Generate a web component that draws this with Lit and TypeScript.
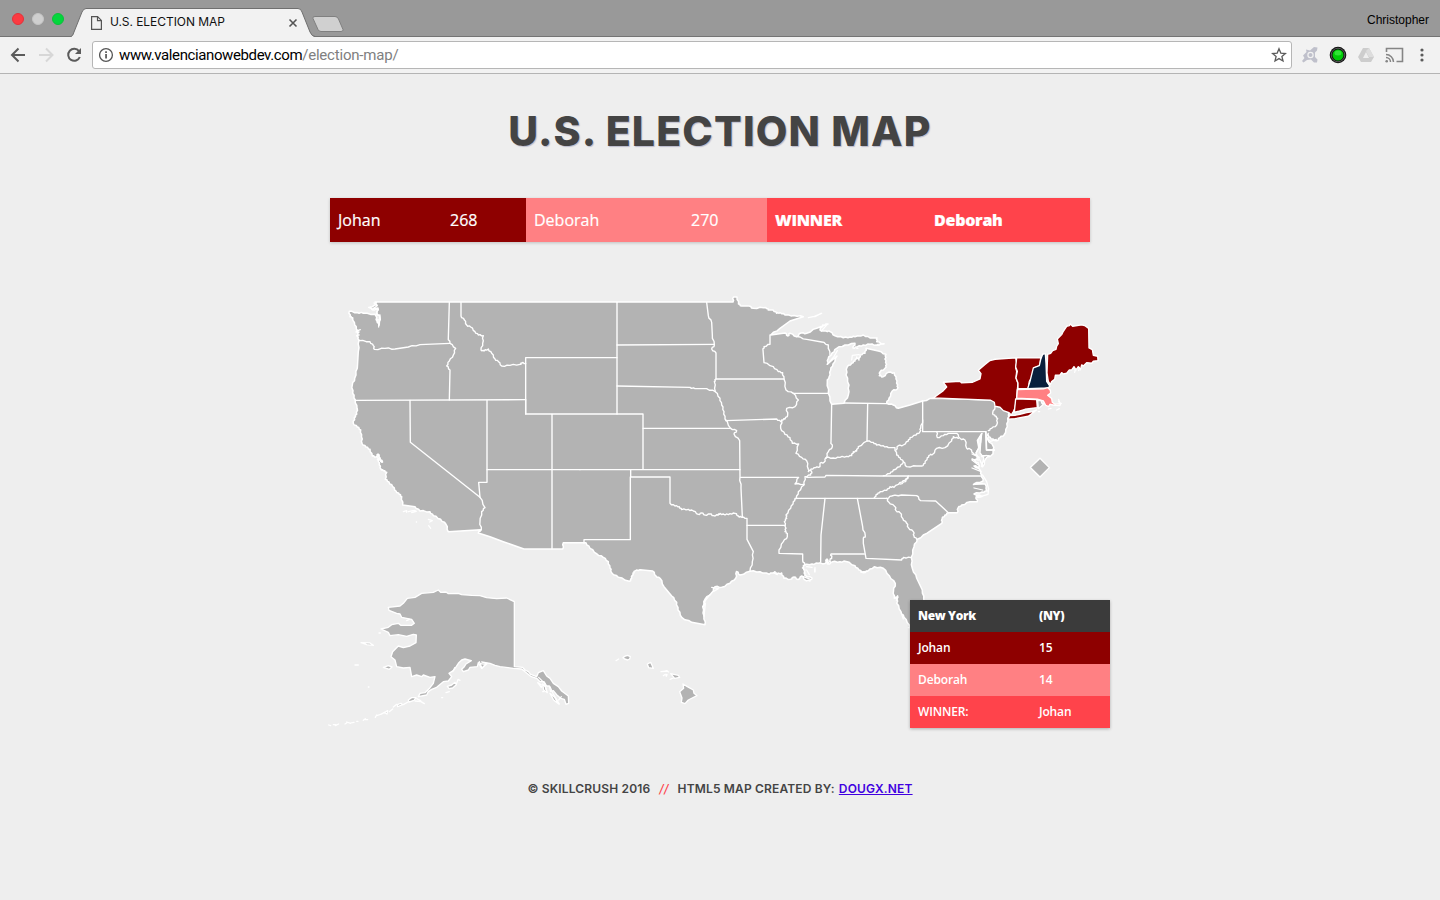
import { LitElement, html, svg, css } from "lit";
import { customElement } from "lit/decorators.js";

const MAINLAND =
  "375 302 377 305 370 307 373 310 378 308 377 313 380 317 379 325 377 321 376 316 375 314.3 363.3 313.3 357 312.5 349.3 311.3 350 316.7 352.7 317.7 354.7 325 357.7 330.7 356 332 359 332 357 336 359 340 358.3 351.7 357.3 368.3 354.7 378.3 352.3 385 352.7 393.3 355.3 400 357 408.3 356.7 414.3 354.3 417.7 353.3 423.3 357.3 427 360.7 430 361.5 437 362 443.3 366 447 370 449.3 372.3 456 376 457 378 454 380 458 382.5 462 378.5 459 379.3 465 381 469 383.3 470.7 386.7 472.3 385.3 479.3 389 482 392.7 486.7 396 491 399.3 494.3 401.7 496.7 402.7 505 415 506.7 420 511 430 511.7 433.3 515.7 440.7 519.3 446 524.3 448.3 531.7 480.5 529.7 478.3 533 490 536.7 503.3 541.7 524 549 562.7 549 563.3 542.7 586 542.7 590 548.3 597 554 603.3 557.3 608.3 561.7 610 568 611.7 572.7 618.3 577.3 629.3 581.3 631.7 578.3 633 573 635 571 640 569.7 652.7 571 656 576 660 578.3 664 586.7 671.7 596 676.7 602.3 678 610 682 617.7 691.7 622.3 705 624.7 704 616 702.7 606.7 705 599.3 711.7 592.7 715 586.7 721.7 587.3 730 583.3 735.7 578.3 736.5 571.5 740 575 750 571.3 760 571.7 769.3 574.3 775 571.7 777 574 781.7 573 784 578.3 790 579.3 794 577 798 579.5 801.7 576 805 580 810 581 812 578 806 576 804 573 805 570 802.5 568 804.3 565 812 564 818.3 563.3 825 563.5 827 559 828.3 564 832 562 840 561.7 846 561.5 855 565.7 859 570 863.3 572.7 868.3 570.7 874.3 566.7 883.3 568.3 889.3 575.7 895.3 583.3 893.5 591 894.3 598.3 898 597 896.7 603.3 901 611.7 904 617.3 909.3 625 915 635 935 640 930 615 923.7 599.3 922.3 590 916.7 578.3 912.3 568.3 911.3 557.3 914 546.7 917.3 539.3 926.7 533.3 941.7 523.3 942 519 945 515 948.3 512.7 957.3 512.7 958 508 961.7 505 970 501.7 977.3 501.7 976 497 982 496.5 974 494 982 492 987.3 491 985 484 974 484 983 481 981.7 475 980 470 974 466 979 467 978.3 463 972 459 978.3 460 976 455 978 450 982.7 466.7 986 458.3 991.7 455 994.3 450 993 446 988 440 988.3 435 991 439 996.7 440.7 1000 437.7 1004 435 1007.3 426.7 1007.7 418.3 1009.3 413.3 1008 411 996 400 933.3 398.3 922.7 401 910 405 898.3 408.3 893.3 405 886.7 403.3 889 398.3 892.3 391 897.3 389 897.7 385 896 379 894.3 372.7 888.3 372.3 883.3 376.7 879.3 375.7 880 372 885 368.3 886.7 364.3 885 359 886 354.3 878.3 351 866 348.3 865 353.3 860 355 859 360 856.7 357 855 361 851.7 363.3 847.3 366.7 846 375 849 385 848.3 395 844 403.3 831.7 404.3 828.3 393.3 827.3 381.7 829 377 830.7 370 833 364 837 356 827.3 364.3 828 359 832 353 836.7 348.3 845 345 855 343.3 853 348 857 347 863.3 345 870 344.3 876 345 884 344 876.7 341.7 877 338 870 338 863.3 335 855 336.7 850 337 843.3 337.7 835 335.7 830 331.7 826 331 821.7 331 820 330 822.7 325 828 324 816.7 328.3 806.7 333.3 801 333 796.7 336.7 790 333.3 788 336 785 333 770.7 335 780 328.3 790 321 803.3 316.7 794 315.5 785 315 780 312.5 776.7 313.3 773 310 768.3 310 766 307.5 763.3 307.7 753.3 308.3 749 306 741.7 306 738.5 304 737 297 733.5 297 733 302";

interface Layer { x: number; y: number; lines: string[]; }

const BORDERS: Layer[] = [
  { x: 320, y: 285, lines: [
    "117,167 150,170 160,182 163,193 195,190 225,192 265,186 300,179 390,175",
    "388,52 385,158 390,175 407,190 400,210 388,228 380,243 390,255 388,345",
    "106,346 617,344",
    "423,52 423,93 433,105 440,120 452,126 465,140 475,150 490,152 488,175 483,195 492,198 505,192 515,205 525,222 535,230 545,243 570,241 600,238 605,234 617,235",
    "617,344 617,387",
    "270,346 271,472 480,637 495,668 485,680 480,710 484,735",
    "501,346 501,592 476,592 480,637",
    "696,388 696,792", "501,554 780,554"] },
  { x: 560, y: 285, lines: [
    "171,218 -103,218 -103,387 249,387 249,553", "171,52 171,387", "171,180 463,178",
    "440,52 445,92 455,112 457,150 463,180 455,192 468,204 468,282 463,290 466,320",
    "171,303 390,307 405,311 440,311 466,320 480,340 485,360 492,380 495,402 512,430 530,437 522,447 539,467 540,575 543,610 547,695",
    "468,282 672,282", "497,407 650,402 663,410",
    "630,150 630,178 612,185 609,195 612,233 640,245 655,260 668,263 672,282 678,315 700,325 715,345 705,365 680,370 683,390 675,402 665,405 662,430 675,448 690,458 697,475 716,477 708,505 725,517 740,527 745,553 755,560 752,570 735,575 732,600 715,620 709,640 700,650 692,670 678,690 680,700 673,710 678,730 675,740 682,745 682,755 670,770 657,795 657,805 728,807 728,825 735,840",
    "700,325 805,325", "249,430 512,430", "60,554 540,554",
    "542,577 716,577 705,597 732,598",
    "212,554 212,576 330,576 330,655 345,663 358,665 365,674 385,673 400,678 415,688 425,684 435,690 450,687 460,692 475,690 480,685 495,690 510,686 525,685 535,693 545,697 561,700 561,763 580,800 577,830 570,859",
    "211,576 211,764 72,764 72,775", "561,721 675,721"] },
  { x: 740, y: 285, lines: [
    "170,155 200,163 245,171 265,180 270,210", "275,358 273,470 277,485 265,500 258,520",
    "383,356 381,468", "312,354 440,356", "548,348 548,440 737,440",
    "548,405 542,430 540,440 528,450 510,458 505,468 490,480 475,482 468,495",
    "205,560 213,552 227,548 240,545 240,535 252,532 258,518 280,519 300,517 320,514 335,512 340,500 350,498 355,485 381,468 400,472 410,480 430,482 445,488 465,488 470,510 480,518 490,530 480,545 460,555 450,566 430,572",
    "200,577 255,576 258,571 430,573 725,573",
    "505,573 497,590 480,597",
    "490,530 500,545 530,543 545,543 555,535 562,518 570,510 578,508 590,490 615,488 635,468 640,455 655,460",
    "590,440 592,458 610,452 625,445 650,445 660,460 675,465 680,490 690,492 700,505 715,512",
    "737,440 739,495 760,495", "720,512 748,512"] },
  { x: 740, y: 460, lines: [
    "503,50 495,62 480,67 462,82 450,80 440,91 420,95 413,102 403,112",
    "165,115 440,115 455,108 485,105 530,107 542,122 587,123 625,158",
    "440,115 445,125 465,140 468,152 480,158 488,175 500,190 505,203 520,215 522,228 530,238",
    "255,115 243,225 242,305", "352,115 368,200 376,228 370,235 370,250 378,295 485,300 490,292 514,293",
    "373,282 273,282 275,292 270,300"] },
  { x: 900, y: 310, lines: ["285,290 278,310 285,318 293,325 290,345 275,355 265,362", "258,365 260,420 283,420"] },
];

const NORTHEAST = [
  { tone: "johan", points: "100,265 130,243 140,232 130,218 180,215 185,220 218,218 240,208 243,192 235,182 255,165 270,153 285,149 347,145 350,160 347,175 350,185 348,205 354,222 352,240 350,265 345,295 340,306 334,316 327,309 310,303 300,293 285,290 283,278 272,272" },
  { tone: "johan", points: "324,329 329,318 345,317 360,314 380,309 395,307 410,301 385,320 345,327" },
  { tone: "johan", points: "350,145 422,145 420,168 402,175 398,200 388,215 385,237 354,237 354,220 348,205 352,185 347,172" },
  { tone: "tie", points: "428,134 436,132 438,160 440,215 450,230 443,235 383,237 390,215 400,175 418,168 422,150" },
  { tone: "johan", points: "443,134 452,131 458,123 468,119 470,110 475,102 472,88 485,75 490,65 500,50 508,48 511,43 518,50 545,46 556,49 566,57 567,115 577,120 580,137 593,140 594,153 580,155 575,161 560,159 550,169 545,166 541,181 535,171 528,181 522,171 515,181 508,181 500,191 490,193 485,189 480,196 466,197 464,209 455,216 451,225 445,215 441,190" },
  { tone: "deborah", points: "352,240 430,238 443,234 451,242 452,250 443,257 455,267 457,278 465,284 480,283 476,275 482,283 480,288 462,287 450,284 446,291 437,287 430,274 412,269 350,266" },
  { tone: "johan", points: "347,268 410,270 412,294 375,299 355,305 343,308" },
  { tone: "none", points: "413,272 423,273 426,282 432,282 424,290 415,297" },
  { tone: "none", points: "420,446 448,474 420,502 391,474" },
];

const ALASKA = [
  "205,112 240,108 250,100 262,85 285,82 305,70 340,67 355,60 362,67 378,66 385,71 415,70 425,74 455,76 480,77 500,83 530,86 560,84 583,95 583,290 608,292 615,300 625,305 632,313 650,320 655,308 670,302 680,318 690,325 700,340 715,350 725,363 745,378 746,400 738,403 733,388 722,385 710,374 700,362 692,364 688,348 680,348 672,335 660,335 650,325 632,319 605,297 580,295 540,290 525,286 510,280 485,276 500,282 485,295 475,278 472,290 450,292 445,300 430,305 425,298 433,290 438,282 454,272 435,267 425,270 415,280 402,300 387,310 395,320 385,333 370,335 350,352 335,358 325,365 320,375 295,380 300,370 315,368 330,353 340,340 345,320 330,322 310,315 305,320 290,315 275,320 270,292 250,294 230,290 225,270 213,260 218,245 235,228 250,233 270,228 288,218 289,195 280,193 260,199 235,194 210,197 205,187 183,177 205,172 215,164 235,160 242,166 275,166 283,160 275,148 245,142 240,132 230,130 207,121",
  "123,218 150,219 160,226 140,224", "190,292 205,287 216,291 208,298",
  "382,349 395,345 405,337 409,344 398,354 387,356", "265,390 275,383 288,383 282,391 267,396",
  "232,404 243,400 248,404 233,410", "193,428 203,422 201,432",
  "653,338 666,346 664,352", "668,342 676,350 682,368 671,360", "690,370 704,382 716,402 701,390",
];
const HAWAII = [
  "189,563 196,558 203,556 211,560 209,567 203,570 194,567", "262,582 272,577 280,595 266,593",
  "332,611 355,616 359,622 344,625", "369,642 382,650 400,660 402,670 411,677 385,690 375,701 364,697 366,684 359,665 371,655",
  "317,613 321,614 319,619",
];

const SPECKS = [
  { x: 320, y: 285, d: "M250 680l10-3 0 5M265 680l18-4 6 3-14 4M325 703l12 4-8 4M326 722l6 8M289 711h1M113 137l8-3M110 152l8-2M146 67l14 6 6-6M162 54l10 8-12 8 14 4-6 14 12 4-2 14-8-4 6 14 0 10M180 90l-2 30M172 518l14 14M174 510l6 10-8 4" },
  { x: 740, y: 285, d: "M205 98l18-4 22-9M225 95l18-10M350 190h4M262 118l-18 20M262 238l20-23 10-18M335 225l2-14 20-2M412 178l20-2" },
  { x: 900, y: 310, d: "M415 305h4M445 297l8-2M470 300l8-4M476 268l4 14M474 282l10-2M520 175l6 4-2 8M538 172l-2 10M246 370l-10 18 2 26-10 14M244 372l-2 26-4 12M216 432l22 10M216 450l18 14M216 474l26 10M265 370l-6 12 12 12 18-6M245 440l14-4M252 450l-8 20M220 524l28-4M222 534l26 6M266 535l-2 18-32 10M248 495l12 20 6 22" },
  { x: 320, y: 570, d: "M26 465l6 2M40 464l8 0M46 467l10-5M75 462l8-5M80 456l12 4M92 459l10-2M110 454h4M130 451l6-5M137 449h6M166 442l4-7M172 436l14-4M182 433l12-6M208 425l10-8M220 411l10-8M250 404l14-8M285 393l18 2 10 6M290 386l12 6M105 285h10M145 351h2M177 189h4M365 383h3M410 340l4-12 6 3M378 368l10-3M398 305l6-12M478 275l8 20 10-12-14-2M260 152l8-4M656 322l18 18 4 18M690 350l10 22 18 30M668 365h4M724 380l-8 10" },
  { x: 560, y: 470, d: "M168 572l8-5M303 605l20-2M318 602l8 4M310 617l4-3M330 628l10-4M430 410l6-18 14-18M432 440l4-40M455 352l20 4-14 8M640 308l12 6M740 290l16 2M765 292v14M740 300l8 14M730 320l22 8" },
  { x: 740, y: 460, d: "M224 327v8M362 336l20-2M467 415l6-8-4 14M486 465l4 12M505 503h3M258 300l4 12 8-10 2 8" },
];

/** Gives short oblique runs a small bend so rivers and shores look natural; straight survey lines stay straight. */
function meander(points: string, bend: number, limit: number): string {
  const n = points.split(/[ ,]+/).map(Number);
  const out: string[] = [`${n[0]},${n[1]}`];
  for (let i = 2; i < n.length; i += 2) {
    const [x0, y0, x1, y1] = [n[i - 2], n[i - 1], n[i], n[i + 1]];
    const dx = x1 - x0, dy = y1 - y0, len = Math.hypot(dx, dy);
    if (len > bend * 3.5 && len < limit && Math.abs(dx) > 0.2 && Math.abs(dy) > 0.2) {
      const side = i % 4 === 0 ? bend : -bend;
      const at = (t: number, k: number) =>
        `${(x0 + dx * t - (dy / len) * k).toFixed(1)},${(y0 + dy * t + (dx / len) * k).toFixed(1)}`;
      out.push(at(0.33, side), at(0.66, -side * 0.7));
    }
    out.push(`${x1},${y1}`);
  }
  return out.join(" ");
}

@customElement("us-map")
class UsMap extends LitElement {
  static styles = css`
    :host { display: block; }
    svg { display: block; width: 800px; height: 450px; }
    .land, .none { fill: #b3b3b3; }
    .outline { stroke: #fff; stroke-width: 1.5; stroke-linejoin: round; }
    .layer { stroke: #fff; stroke-width: 4; stroke-linejoin: round; stroke-linecap: round; }
    .lines { fill: none; }
    .specks { fill: none; stroke-width: 3.8; }
    .thin { stroke-width: 4.1; }
    .coast { stroke-width: 4; }
    .johan { fill: #8e0000; }
    .deborah { fill: #ff8083; }
    .tie { fill: #091f3c; }
    .water { fill: #eee; }
  `;
  private place(x: number, y: number) { return `translate(${x} ${y}) scale(.33333)`; }
  render() {
    return html`<svg viewBox="320 290 800 450" role="img" aria-label="United States">
      <polygon class="land outline" points=${meander(MAINLAND, 0.6, 12)}></polygon>
      ${BORDERS.map((l) => svg`<g class="layer lines thin" transform=${this.place(l.x, l.y)}>
        ${l.lines.map((p) => svg`<polyline points=${meander(p, 1.8, 36)}></polyline>`)}</g>`)}
      <g class="layer" transform=${this.place(900, 309.6)}>
        <polygon class="water" points="245,372 232,392 236,414 228,432 240,452 246,465 252,446 240,430 242,400"></polygon>
        ${NORTHEAST.map((s) => svg`<polygon class=${s.tone} points=${s.points}></polygon>`)}
      </g>
      <g class="layer coast land" transform=${this.place(320, 570)}>${ALASKA.map((p) => svg`<polygon points=${p}></polygon>`)}</g>
      <g class="layer coast land" transform=${this.place(560, 470)}>${HAWAII.map((p) => svg`<polygon points=${p}></polygon>`)}</g>
      ${SPECKS.map((s) => svg`<path class="layer specks" transform=${this.place(s.x, s.y)} d=${s.d}></path>`)}
    </svg>`;
  }
}

@customElement("browser-chrome")
class BrowserChrome extends LitElement {
  static styles = css`
    :host { display: block; font-family: Inter, sans-serif; }
    .strip { height: 37px; display: flex; background: #999; box-shadow: inset 0 -1px #747474; }
    .lights { display: flex; gap: 8px; padding: 13px 0 0 12px; width: 60px; box-sizing: border-box; flex: none; }
    .light { width: 12px; height: 12px; border-radius: 50%; flex: none; box-sizing: border-box; }
    .close { background: #fc3a41; border: 1px solid #e2323a; }
    .min { background: #cfcfcf; border: 1px solid #c4c4c4; }
    .max { background: #03d63c; border: 1px solid #0cc03a; }
    .tab { position: relative; width: 244px; height: 37px; margin-left: 11px; display: flex; align-items: flex-start; }
    .shape { position: absolute; inset: 0; }
    .label { position: relative; display: flex; width: 212px; height: 14px; margin: 16px 0 0 20px; align-items: center; }
    .title { font-size: 12px; line-height: 14px; letter-spacing: -.06px; color: #111; margin: -2px 0 0 8px; flex: 1; white-space: nowrap; }
    .plus { margin: 15px 0 0 -4px; }
    .user { margin: 12px 11px 0 auto; font: 12px/16px "Liberation Sans", sans-serif; color: #000; }
    .bar { height: 37px; box-sizing: border-box; background: #f2f2f2; border-bottom: 1px solid #b4b4b4; display: flex; align-items: center; }
    .nav { width: 92px; display: flex; flex: none; }
    .box { width: 1200px; height: 28px; box-sizing: border-box; border: 1px solid #b6b6b6; border-radius: 3px; background: #fff; display: flex; align-items: center; padding: 0 4px 0 6px; flex: none; }
    .url { font: 15px/20px Roboto, sans-serif; letter-spacing: -.39px; color: #000; margin-left: 5px; flex: 1; white-space: nowrap; }
    .path { color: #808080; letter-spacing: -.2px; }
    .tools { display: flex; flex: 1; }
    svg { display: block; flex: none; }
  `;
  render() {
    return html`
      <div class="strip">
        <div class="lights"><i class="light close"></i><i class="light min"></i><i class="light max"></i></div>
        <div class="tab">
          <svg class="shape" width="244" height="37" viewBox="0 0 244 37"><path d="M0 37 C2 36 2 34 3 32L11 12Q12.500 8.500 15 8.500H227Q230 8.500 231 12L239 32Q241 36.500 244 37Z" fill="#f2f2f2"/><path d="M0 36.500Q2 36 3 32L11 12Q12.500 8.500 15 8.500H227Q230 8.500 231 12L239 32Q241 36.500 244 36.500" fill="none" stroke="#6f6f6f"/></svg>
          <div class="label">
            <svg width="11" height="14" viewBox="0 0 11 14"><path d="M.6.6h6l3.800 3.800v9H.6zM6.500.6v4h4" fill="none" stroke="#555" stroke-width="1.200"/></svg>
            <span class="title">U.S. ELECTION MAP</span>
            <svg width="16" height="14" viewBox="0 0 16 14"><path d="M2.500 3.500l7 7M9.500 3.500l-7 7" stroke="#555" stroke-width="1.600"/></svg>
          </div>
        </div>
        <svg class="plus" width="34" height="18" viewBox="0 0 34 18"><path d="M4 1.500H24Q26.500 1.500 27.500 4L32 14.500Q32.500 16.500 30 16.500H10Q8 16.500 7 14.500L2 3.500Q1 1.500 4 1.500Z" fill="#d0d0d0" stroke="#808080"/></svg>
        <span class="user">Christopher</span>
      </div>
      <div class="bar">
        <svg class="nav" width="92" height="28" viewBox="0 0 92 28" fill="none" stroke-width="2">
          <path d="M25 14H12.500M18.500 7.500L12 14l6.500 6.500" stroke="#5b5b5b"/>
          <path d="M39 14H52.500M46 7.500L52.500 14 46 20.500" stroke="#d7d7d7"/>
          <path d="M79 10.200A6 6 0 1 0 79.800 16" stroke="#5b5b5b"/><path d="M81 7v6h-6z" fill="#5b5b5b"/>
        </svg>
        <div class="box">
          <svg width="15" height="16" viewBox="0 0 15 16"><circle cx="7" cy="8" r="6.400" fill="none" stroke="#555" stroke-width="1.300"/><path d="M6.200 7h1.700v4.600H6.200zM6.200 4.300h1.700v1.600H6.200z" fill="#555"/></svg>
          <span class="url">www.valencianowebdev.com<span class="path">/election-map/</span></span>
          <svg width="16" height="16" viewBox="0 0 16 16"><path d="M8 1.800l1.800 4.300 4.600.4-3.500 3 1.100 4.500L8 11.600 4 14l1.100-4.500-3.500-3 4.600-.4z" fill="none" stroke="#5b5b5b" stroke-width="1.300"/></svg>
        </div>
        <svg class="tools" width="148" height="28" viewBox="0 0 148 28">
          <path d="M11 14.500L14.500 11 14 8.500 18 9.500 22 6 25.500 6.500 25 9.500 23 11.500 23 16 25.500 18.500 25 21.500 22 21.500 19 18.500 15 19 11.500 21.500 10 20 12.500 17z" fill="#bfc0cb"/><circle cx="18.500" cy="14" r="2.600" fill="#bfc0cb" stroke="#f2f2f2" stroke-width="1.200"/>
          <circle cx="46" cy="14" r="8.300" fill="#111"/><circle cx="46" cy="14" r="6.800" fill="none" stroke="#777" stroke-width=".7"/><circle cx="46" cy="14" r="5.500" fill="#00cb08"/><ellipse cx="46" cy="12" rx="3.500" ry="2.500" fill="#30e535"/>
          <path d="M71 7h6l5 9-3 5H69l-3-5z" fill="#cdcdcd"/><path d="M74 11l3 6h-6z" fill="#eee"/><path d="M77 7l5 9h-5l-3-6z" fill="#ddd"/>
          <path d="M94.500 11V7.500h16v13h-6" fill="none" stroke="#858585" stroke-width="1.600"/><path d="M94 13.500a7.500 7.500 0 0 1 7.500 7.500M94 16.500a4.500 4.500 0 0 1 4.500 4.500" fill="none" stroke="#858585" stroke-width="1.500"/><circle cx="94.700" cy="20.300" r="1.300" fill="#858585"/>
          <g fill="#5b5b5b"><circle cx="130" cy="9" r="1.600"/><circle cx="130" cy="14" r="1.600"/><circle cx="130" cy="19" r="1.600"/></g>
        </svg>
      </div>`;
  }
}

@customElement("app-root")
class AppRoot extends LitElement {
  static styles = css`
    :host { display: block; width: 1440px; height: 900px; overflow: hidden; background: #eee; font-family: "Open Sans", sans-serif; }
    .page { display: flex; flex-direction: column; align-items: center; }
    h1 { margin: 31px 0 0; font: 800 41px/52px Inter, sans-serif; letter-spacing: 1.15px; color: #444; text-shadow: 1px 1px 1px #bbc; white-space: nowrap; }
    .score { width: 760px; height: 44px; margin: 41px 0 0 -20px; display: grid; grid-template-columns: 112px 84px 157px 84px 159px 164px; box-shadow: 0 1px 3px #0003; color: #fff; font-size: 16px; line-height: 44px; -webkit-text-stroke: .2px #fff; }
    .cell { padding-left: 8px; white-space: nowrap; }
    .johan { background: #8e0000; }
    .deborah { background: #ff8083; }
    .winner { background: #ff434b; }
    .strong { font-weight: 800; letter-spacing: -.25px; }
    .map { position: relative; width: 800px; height: 450px; margin-top: 48px; }
    .state { position: absolute; left: 590px; top: 310px; width: 200px; box-shadow: 0 1px 3px #0004; color: #fff; font-size: 12px; font-weight: 600; letter-spacing: -.15px; line-height: 32px; }
    .row { display: grid; grid-template-columns: 121px 79px; height: 32px; }
    .head { background: #3b3b3b; font-weight: 800; letter-spacing: -.35px; }
    footer { margin-top: 39px; font: 600 12px/20px Inter, sans-serif; letter-spacing: .16px; color: #444; white-space: nowrap; display: flex; }
    .slash { color: #ff434b; font-weight: 500; font-style: italic; margin: 0 9px; }
    a { color: #4000e0; text-decoration: underline; margin-left: 4px; }
  `;
  render() {
    return html`
      <browser-chrome></browser-chrome>
      <main class="page">
        <h1>U.S. ELECTION MAP</h1>
        <div class="score">
          <span class="cell johan">Johan</span><span class="cell johan">268</span>
          <span class="cell deborah">Deborah</span><span class="cell deborah">270</span>
          <span class="cell winner strong">WINNER</span><span class="cell winner strong">Deborah</span>
        </div>
        <div class="map">
          <us-map></us-map>
          <div class="state">
            <div class="row head"><span class="cell">New York</span><span class="cell">(NY)</span></div>
            <div class="row johan"><span class="cell">Johan</span><span class="cell">15</span></div>
            <div class="row deborah"><span class="cell">Deborah</span><span class="cell">14</span></div>
            <div class="row winner"><span class="cell">WINNER:</span><span class="cell">Johan</span></div>
          </div>
        </div>
        <footer><span>© SKILLCRUSH 2016</span><span class="slash">//</span><span>HTML5 MAP CREATED BY:</span><a href="#">DOUGX.NET</a></footer>
      </main>`;
  }
}
